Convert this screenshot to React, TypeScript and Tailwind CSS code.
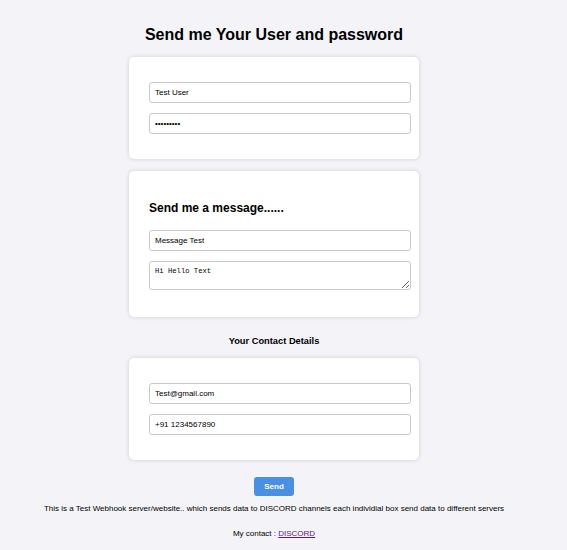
const inputCls =
  "block box-border w-[262px] h-[21px] my-[5px] px-[5px] border border-[#c8c8c8] rounded-[3px] text-[8px] leading-[9px] outline-none";
const cardCls =
  "mx-auto flex flex-col w-[290px] box-border p-[20px] bg-white rounded-[5px] shadow-[0_0_4px_rgba(0,0,0,0.16)]";

export default function App() {
  return (
    <div className="min-h-[550px] w-full bg-[#f4f4f8] font-['Liberation_Sans',Arial,sans-serif] text-black">
      <div className="w-[548px] pt-[26px]">
        <h1 className="text-center text-[16px] font-bold leading-[18px] mb-[13px]">
          Send me Your User and password
        </h1>

        {/* Login card */}
        <div className={cardCls}>
          <input className={inputCls} defaultValue="Test User" />
          <input type="password" className={inputCls} defaultValue="password1" />
        </div>

        {/* Message card */}
        <div className={cardCls + " mt-[12px]"}>
          <h2 className="text-[12px] font-bold leading-[14px] mt-[10px] mb-[10px]">Send me a message......</h2>
          <input className={inputCls} defaultValue="Message Test" />
          <textarea
            className="block box-border w-[262px] h-[29px] mt-[5px] mb-[7px] px-[5px] py-[5px] border border-[#c8c8c8] rounded-[3px] text-[7.2px] leading-[9px] font-['Liberation_Mono',monospace] outline-none"
            defaultValue="Hi Hello Text"
          />
        </div>

        <h3 className="text-center text-[9.3px] font-bold leading-[11px] mt-[19px] mb-[11px]">Your Contact Details</h3>

        {/* Contact card */}
        <div className={cardCls}>
          <input className={inputCls} defaultValue="Test@gmail.com" />
          <input className={inputCls} defaultValue="+91 1234567890" />
        </div>

        <div className="flex justify-center mt-[17px]">
          <button className="w-[40px] h-[19px] bg-[#4a90e2] text-white text-[8px] font-bold rounded-[3px]">
            Send
          </button>
        </div>

        <p className="text-center text-[8px] leading-[9px] mt-[8px]">
          This is a Test Webhook server/website.. which sends data to DISCORD channels each individial box send data to different servers
        </p>

        <p className="text-center text-[8px] leading-[9px] mt-[16px]">
          My contact : <a href="#" className="text-[#551a8b] underline">DISCORD</a>
        </p>
      </div>
    </div>
  );
}
